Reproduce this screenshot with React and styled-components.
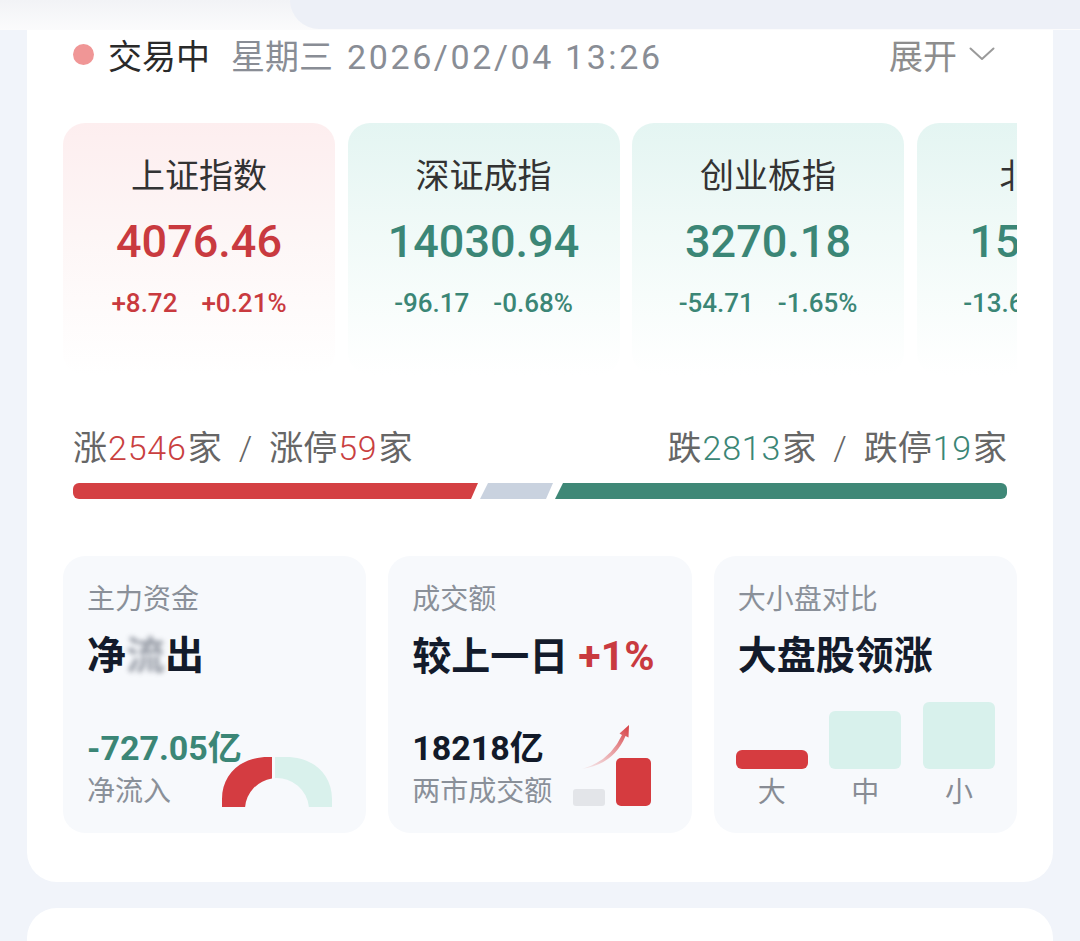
import React from "react";
import styled, { createGlobalStyle } from "styled-components";

const GlobalStyle = createGlobalStyle`
  html, body { margin: 0; padding: 0; }
  body {
    background: #f1f4fa;
    font-family: Roboto, "Noto Sans CJK SC", "Noto Sans", sans-serif;
    -webkit-font-smoothing: antialiased;
  }
  * { box-sizing: border-box; }
`;

const RED = "#c93a3f";
const GREEN = "#3b8676";

const Page = styled.div`
  width: 1080px;
  min-height: 941px;
  overflow: hidden;
`;

const TopStrip = styled.div`
  display: flex;
  height: 30px;
  background: linear-gradient(180deg, #f2f3f6 0%, #fbfbfc 100%);
`;

const TabFill = styled.div`
  width: 290px;
`;

const TabRest = styled.div`
  flex: 1;
  height: 29px;
  background: #edf0f7;
  border-bottom-left-radius: 30px;
`;

const MainCard = styled.section`
  margin: 0 27px;
  background: #ffffff;
  border-radius: 0 0 30px 30px;
  padding: 0 36px 49px;
`;

const Header = styled.header`
  display: flex;
  align-items: center;
  justify-content: space-between;
  height: 48px;
  padding: 0 22px 0 10px;
  font-size: 34px;
`;

const Status = styled.div`
  display: flex;
  align-items: center;
`;

const Dot = styled.span`
  width: 21px;
  height: 21px;
  border-radius: 50%;
  background: #f09696;
  margin-right: 14px;
`;

const StatusText = styled.span`
  color: #2a2a2a;
  margin-right: 21px;
`;

const DateText = styled.span`
  color: #898d95;
`;

const DateDigits = styled.span`
  margin-left: 14px;
  letter-spacing: 2.6px;
`;

const Expand = styled.div`
  display: flex;
  align-items: center;
  gap: 12px;
  color: #8d8d8d;
`;

const IndexScroller = styled.div`
  margin-top: 45px;
  display: flex;
  gap: 12.5px;
  overflow: hidden;
`;

const IndexCard = styled.div`
  flex: 0 0 272px;
  height: 252px;
  border-radius: 22px;
  background: ${(p) =>
    p.$up
      ? "linear-gradient(180deg, #fdeeef 0%, #fdf6f6 45%, #ffffff 100%)"
      : "linear-gradient(180deg, #e4f5f2 0%, #f1faf8 45%, #ffffff 100%)"};
  display: flex;
  flex-direction: column;
  align-items: center;
  padding-top: 31px;
  white-space: nowrap;
`;

const IndexName = styled.div`
  font-size: 34px;
  line-height: 44px;
  color: #333333;
`;

const IndexValue = styled.div`
  margin-top: 16px;
  font-size: 45px;
  line-height: 56px;
  font-weight: 500;
  color: ${(p) => (p.$up ? RED : GREEN)};
`;

const IndexChange = styled.div`
  margin-top: 16px;
  display: flex;
  gap: 24px;
  font-size: 26px;
  line-height: 34px;
  font-weight: 500;
  color: ${(p) => (p.$up ? RED : GREEN)};
`;

const Breadth = styled.div`
  margin-top: 51px;
  padding: 0 10px;
  display: flex;
  justify-content: space-between;
  font-size: 34px;
  line-height: 44px;
  color: #666666;
`;

const Num = styled.span`
  color: ${(p) => (p.$up ? "#c9403f" : GREEN)};
  font-weight: 300;
  letter-spacing: 0.8px;
  margin: 0 1px;
`;

const Slash = styled.span`
  margin: 0 17px;
  font-weight: 300;
`;

const RatioBar = styled.div`
  margin: 13px 10px 0;
  display: flex;
  gap: 2px;
  height: 16px;
`;

const Segment = styled.div`
  flex: ${(p) => p.$grow} 0 0;
  background: ${(p) => p.$color};
  clip-path: ${(p) => p.$clip};
  border-radius: ${(p) => p.$radius};
`;

const StatGrid = styled.div`
  margin-top: 57px;
  display: grid;
  grid-template-columns: repeat(3, minmax(0, 1fr));
  gap: 22px;
`;

const StatCard = styled.div`
  height: 277px;
  border-radius: 22px;
  background: #f7f9fc;
  padding: 24px 24px 24px;
  display: flex;
  flex-direction: column;
`;

const StatLabel = styled.div`
  font-size: 28px;
  line-height: 40px;
  color: #8a9099;
`;

const StatHead = styled.div`
  margin-top: 12px;
  font-size: 39px;
  line-height: 48px;
  font-weight: 700;
  color: #131b2b;
  white-space: nowrap;
`;

const Masked = styled.span`
  filter: blur(2.5px);
  color: #7a808c;
  opacity: 0.75;
`;

const Accent = styled.span`
  color: ${RED};
  margin-left: 10px;
  font-size: 41px;
  font-weight: 700;
`;

const StatBottom = styled.div`
  margin-top: auto;
  display: grid;
`;

const BottomText = styled.div`
  grid-area: 1 / 1;
  align-self: end;
  justify-self: start;
`;

const BottomValue = styled.div`
  font-size: 34px;
  line-height: 40px;
  font-weight: 700;
  color: ${(p) => p.$color};
  margin-bottom: 7px;
  white-space: nowrap;
`;

const BottomSub = styled.div`
  font-size: 28px;
  line-height: 34px;
  color: #8a9099;
`;

const ChartSlot = styled.svg`
  grid-area: 1 / 1;
  align-self: end;
  justify-self: end;
  margin-right: ${(p) => p.$mr}px;
  margin-bottom: ${(p) => p.$mb}px;
  display: block;
`;

const SizeBars = styled.div`
  margin: auto -2px -1px;
  display: grid;
  grid-template-columns: repeat(3, 72px);
  justify-content: space-between;
`;

const SizeCol = styled.div`
  display: flex;
  flex-direction: column;
  align-items: center;
  justify-content: flex-end;
`;

const SizeBar = styled.div`
  width: 72px;
  height: ${(p) => p.$h}px;
  border-radius: 6px;
  background: ${(p) => (p.$up ? "#d63c40" : "#d8f1ec")};
`;

const SizeLabel = styled.div`
  margin-top: 7px;
  font-size: 28px;
  line-height: 34px;
  color: #888c94;
`;

const NextCard = styled.div`
  margin: 26px 27px 0;
  height: 60px;
  background: #ffffff;
  border-radius: 30px 30px 0 0;
`;

const indices = [
  { name: "上证指数", value: "4076.46", chg: "+8.72", pct: "+0.21%", up: true },
  { name: "深证成指", value: "14030.94", chg: "-96.17", pct: "-0.68%", up: false },
  { name: "创业板指", value: "3270.18", chg: "-54.71", pct: "-1.65%", up: false },
  { name: "北证50", value: "1526.43", chg: "-13.65", pct: "-0.89%", up: false },
];

const Chevron = () => (
  <svg width="26" height="14" viewBox="0 0 26 14">
    <polyline points="1.5,1.5 13,12 24.5,1.5" fill="none" stroke="#9a9a9a" strokeWidth="2" strokeLinecap="round" strokeLinejoin="round" />
  </svg>
);

export default function App() {
  return (
    <Page>
      <GlobalStyle />
      <TopStrip>
        <TabFill />
        <TabRest />
      </TopStrip>
      <MainCard>
        <Header>
          <Status>
            <Dot />
            <StatusText>交易中</StatusText>
            <DateText>
              星期三<DateDigits>2026/02/04 13:26</DateDigits>
            </DateText>
          </Status>
          <Expand>
            展开
            <Chevron />
          </Expand>
        </Header>

        <IndexScroller>
          {indices.map((it) => (
            <IndexCard key={it.name} $up={it.up}>
              <IndexName>{it.name}</IndexName>
              <IndexValue $up={it.up}>{it.value}</IndexValue>
              <IndexChange $up={it.up}>
                <span>{it.chg}</span>
                <span>{it.pct}</span>
              </IndexChange>
            </IndexCard>
          ))}
        </IndexScroller>

        <Breadth>
          <div>
            涨<Num $up>2546</Num>家<Slash>/</Slash>涨停<Num $up>59</Num>家
          </div>
          <div>
            跌<Num>2813</Num>家<Slash>/</Slash>跌停<Num>19</Num>家
          </div>
        </Breadth>

        <RatioBar>
          <Segment
            $grow={405}
            $color="#d44043"
            $radius="6px 0 0 6px"
            $clip="polygon(0 0, 100% 0, calc(100% - 7px) 100%, 0 100%)"
          />
          <Segment
            $grow={73}
            $color="#c9d2df"
            $radius="0"
            $clip="polygon(8px 0, 100% 0, calc(100% - 7px) 100%, 0 100%)"
          />
          <Segment
            $grow={452}
            $color="#3f8877"
            $radius="0 6px 6px 0"
            $clip="polygon(8px 0, 100% 0, 100% 100%, 0 100%)"
          />
        </RatioBar>

        <StatGrid>
          <StatCard>
            <StatLabel>主力资金</StatLabel>
            <StatHead>
              净<Masked>流</Masked>出
            </StatHead>
            <StatBottom>
              <BottomText>
                <BottomValue $color={GREEN}>-727.05亿</BottomValue>
                <BottomSub>净流入</BottomSub>
              </BottomText>
              <ChartSlot width="110" height="50" viewBox="0 0 110 50" $mr={10} $mb={2}>
                <path d="M0 50 L0 42 C0 17 19 0 46 0 L50 0 L50 21.4 A32 32 0 0 0 23.1 50 Z" fill="#d43c41" />
                <path d="M53 0 L64 0 C91 0 110 17 110 42 L110 50 L86.9 50 A32 32 0 0 0 53 21.1 Z" fill="#d9f1ec" />
              </ChartSlot>
            </StatBottom>
          </StatCard>

          <StatCard>
            <StatLabel>成交额</StatLabel>
            <StatHead>
              较上一日<Accent>+1%</Accent>
            </StatHead>
            <StatBottom>
              <BottomText>
                <BottomValue $color="#121a29">18218亿</BottomValue>
                <BottomSub>两市成交额</BottomSub>
              </BottomText>
              <ChartSlot width="80" height="86" viewBox="0 0 80 86" $mr={16} $mb={1}>
                <defs>
                  <linearGradient id="swoosh" x1="0" y1="1" x2="1" y2="0">
                    <stop offset="0" stopColor="#e7878a" stopOpacity="0.12" />
                    <stop offset="1" stopColor="#d63c40" />
                  </linearGradient>
                </defs>
                <rect x="1" y="67" width="32" height="17" rx="3" fill="#e3e5e9" />
                <rect x="44" y="36" width="35" height="48" rx="5" fill="#d53b3f" />
                <path d="M10 47 Q38 39 50 13 L47.5 11.5 L57 3 L56.5 15.5 L53.5 14 Q42 42 10 47 Z" fill="url(#swoosh)" />
              </ChartSlot>
            </StatBottom>
          </StatCard>

          <StatCard>
            <StatLabel>大小盘对比</StatLabel>
            <StatHead>大盘股领涨</StatHead>
            <SizeBars>
              <SizeCol>
                <SizeBar $h={19} $up />
                <SizeLabel>大</SizeLabel>
              </SizeCol>
              <SizeCol>
                <SizeBar $h={58} />
                <SizeLabel>中</SizeLabel>
              </SizeCol>
              <SizeCol>
                <SizeBar $h={67} />
                <SizeLabel>小</SizeLabel>
              </SizeCol>
            </SizeBars>
          </StatCard>
        </StatGrid>
      </MainCard>
      <NextCard />
    </Page>
  );
}
